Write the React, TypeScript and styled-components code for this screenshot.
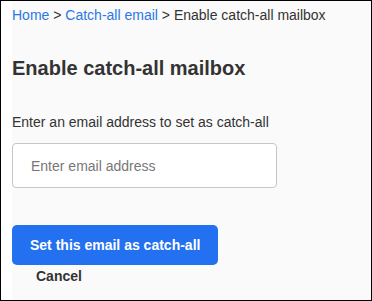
import styled, { createGlobalStyle } from "styled-components";

const GlobalStyle = createGlobalStyle`
	html, body {
		margin: 0;
		padding: 0;
		background: #ffffff;
	}
	* {
		box-sizing: border-box;
	}
`;

const Frame = styled.div`
	width: 372px;
	height: 301px;
	border: 1px solid #000000;
	background-color: #ffffff;
	padding-left: 11px;
	font-family: "Liberation Sans", Arial, sans-serif;
	color: #333333;
`;

const Panel = styled.main`
	height: 100%;
	background-color: #fafafa;
	padding-top: 6px;
	display: flex;
	flex-direction: column;
`;

const Breadcrumb = styled.nav`
	font-size: 14px;
	line-height: 16px;
	color: #333333;
`;

const CrumbLink = styled.a`
	color: #2a78e4;
	text-decoration: none;
`;

const Title = styled.h1`
	margin: 34px 0 0;
	font-size: 20px;
	line-height: 23px;
	font-weight: bold;
	color: #333333;
`;

const Label = styled.label`
	margin-top: 34px;
	font-size: 14px;
	line-height: 16px;
	color: #333333;
`;

const EmailInput = styled.input`
	margin-top: 13px;
	width: 265px;
	height: 45px;
	padding: 0 18px;
	border: 1px solid #c6c6c6;
	border-radius: 4px;
	background-color: #ffffff;
	font-family: inherit;
	font-size: 14px;
	color: #333333;
	outline: none;
	&::placeholder {
		color: #777777;
	}
`;

const Actions = styled.div`
	margin-top: 37px;
	display: flex;
	flex-direction: column;
	align-items: flex-start;
`;

const PrimaryButton = styled.button`
	height: 40px;
	padding: 0 18px;
	border: none;
	border-radius: 5px;
	background-color: #2370f0;
	color: #ffffff;
	font-family: inherit;
	font-size: 14px;
	font-weight: bold;
	cursor: pointer;
`;

const CancelButton = styled.button`
	padding: 3px 24px 2px;
	border: none;
	background: none;
	color: #333333;
	font-family: inherit;
	font-size: 14px;
	line-height: 16px;
	font-weight: bold;
	cursor: pointer;
`;

const App = () => {
	return (
		<>
			<GlobalStyle />
			<Frame>
				<Panel>
					<Breadcrumb>
						<CrumbLink href="#">Home</CrumbLink> &gt;{" "}
						<CrumbLink href="#">Catch-all email</CrumbLink> &gt; Enable
						catch-all mailbox
					</Breadcrumb>
					<Title>Enable catch-all mailbox</Title>
					<Label htmlFor="catch-all-email">
						Enter an email address to set as catch-all
					</Label>
					<EmailInput
						id="catch-all-email"
						type="email"
						placeholder="Enter email address"
					/>
					<Actions>
						<PrimaryButton>Set this email as catch-all</PrimaryButton>
						<CancelButton>Cancel</CancelButton>
					</Actions>
				</Panel>
			</Frame>
		</>
	);
};

export default App;
